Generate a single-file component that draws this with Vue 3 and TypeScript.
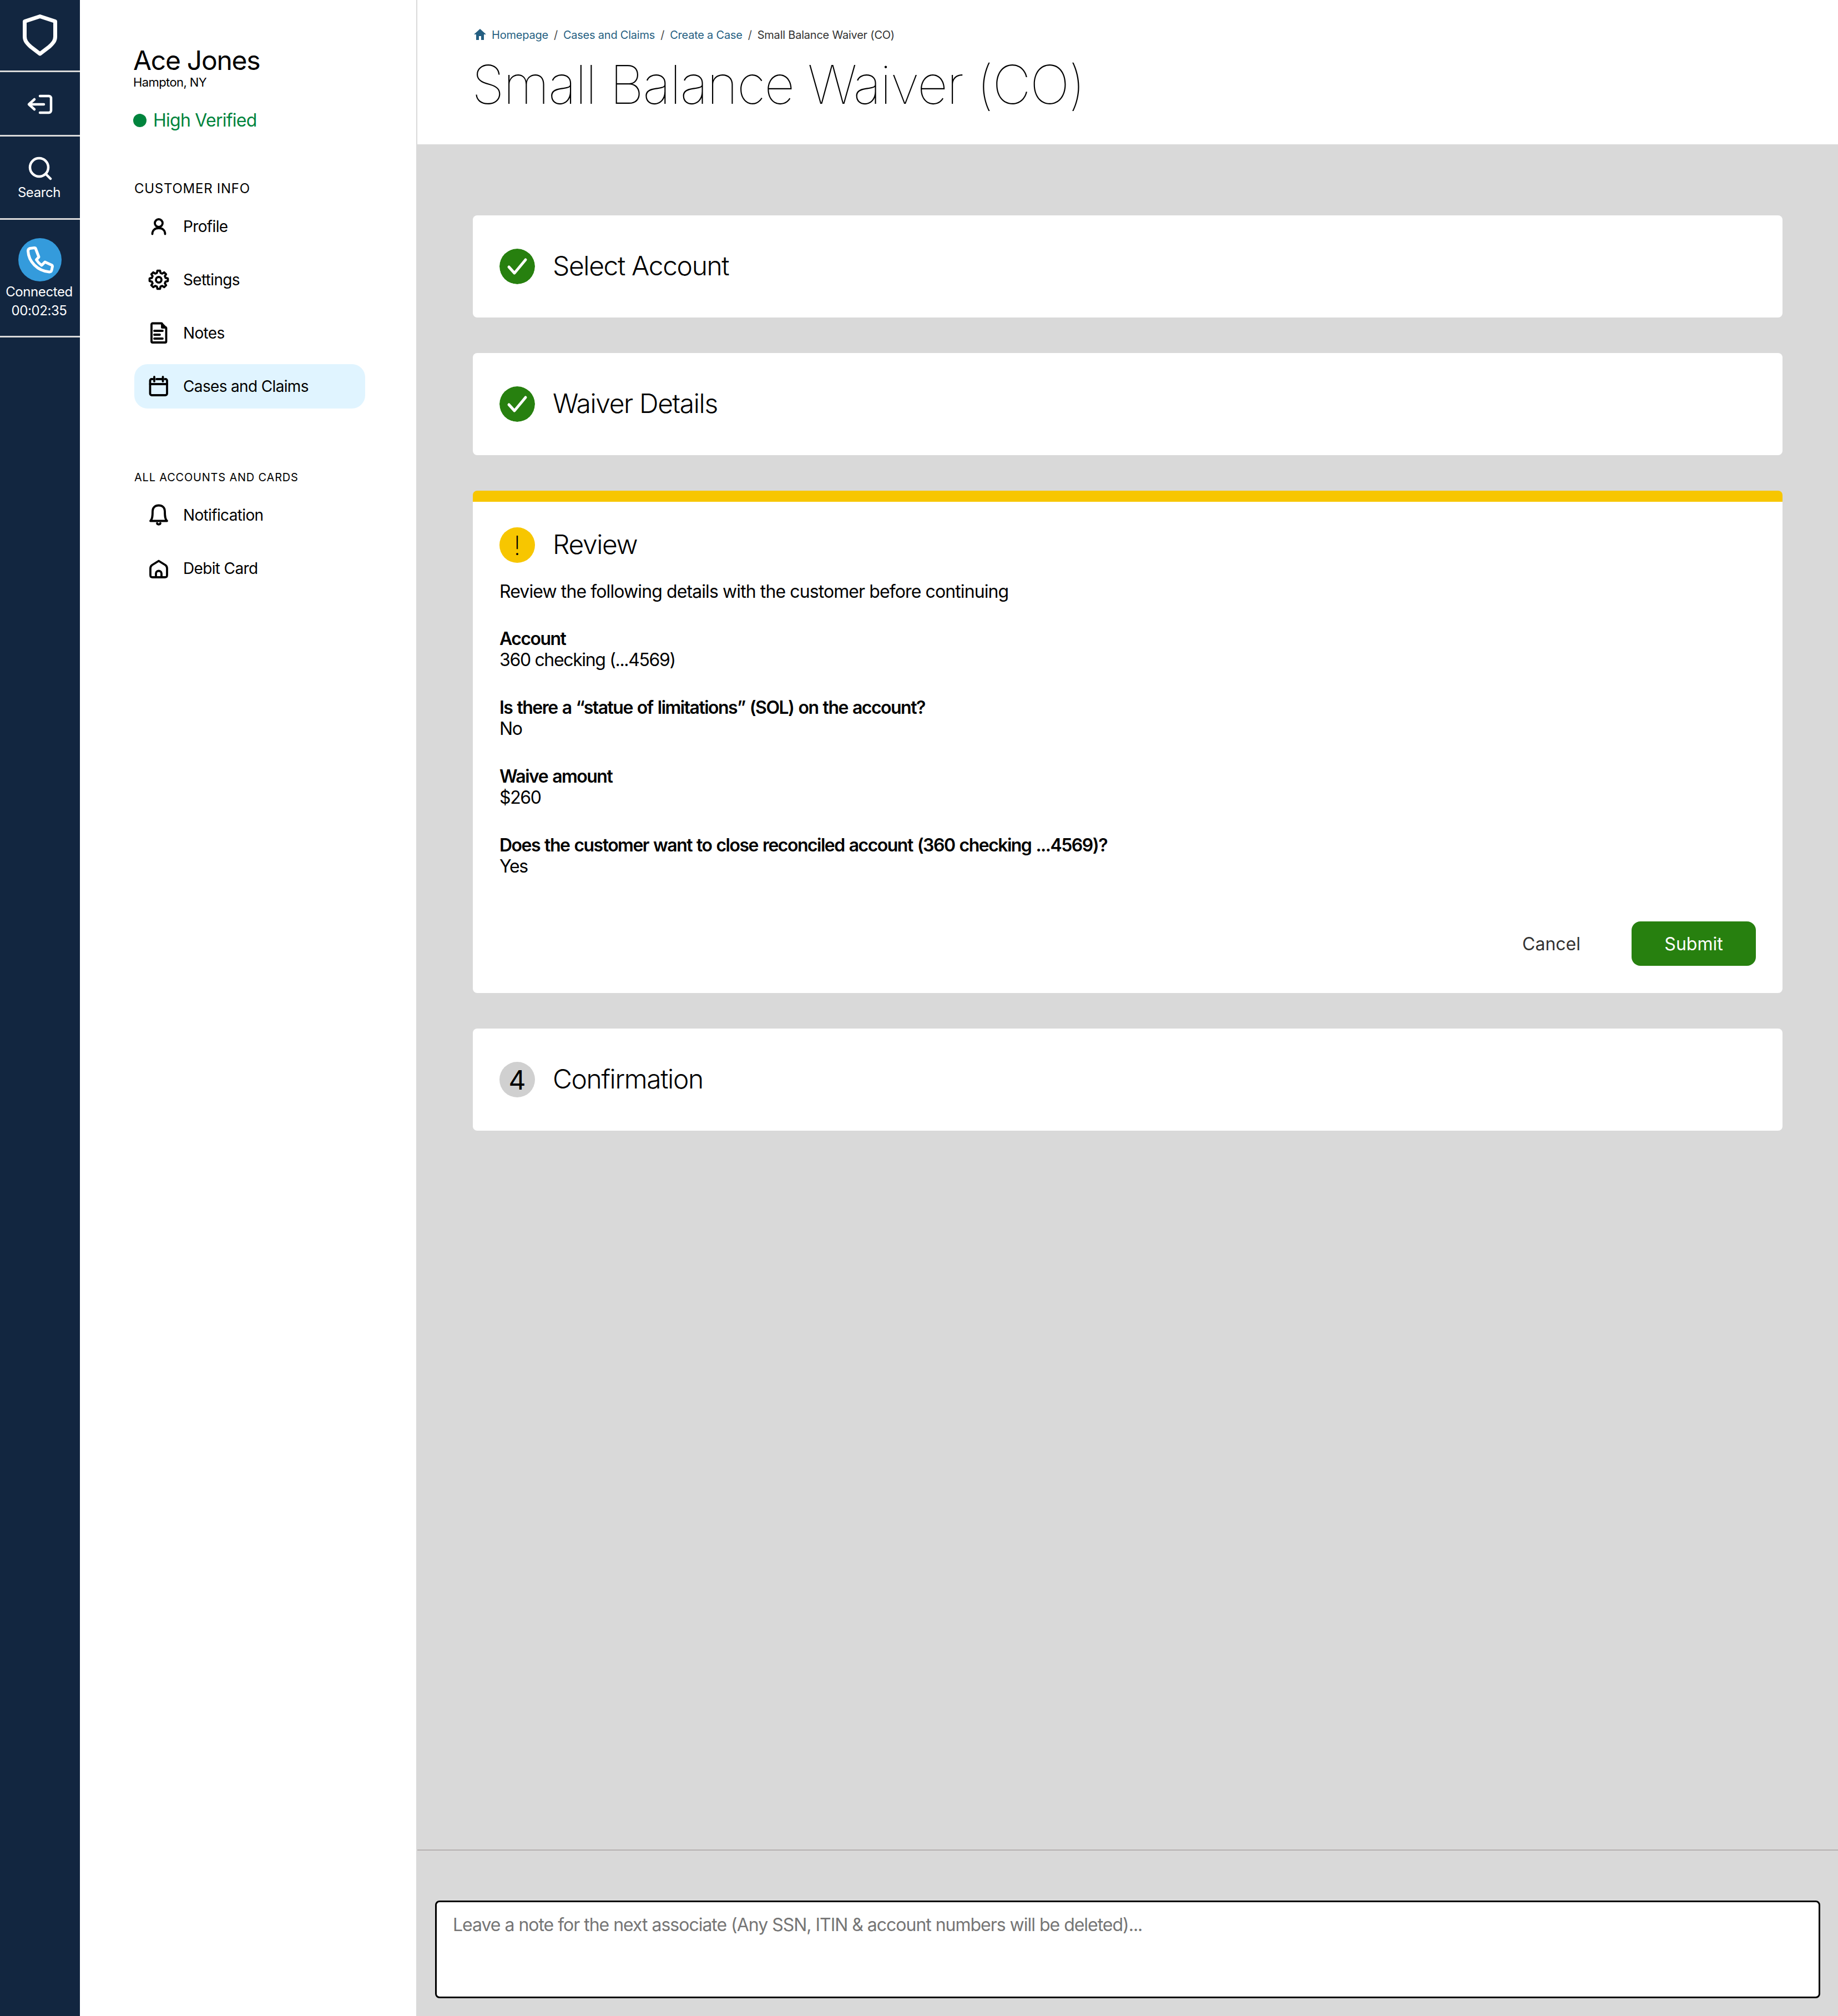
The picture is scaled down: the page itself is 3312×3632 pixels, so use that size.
<script setup lang="ts">
const customerItems = [
  { label: 'Profile', icon: 'profile' },
  { label: 'Settings', icon: 'settings' },
  { label: 'Notes', icon: 'notes' },
  { label: 'Cases and Claims', icon: 'cases', active: true },
]
const accountItems = [
  { label: 'Notification', icon: 'bell' },
  { label: 'Debit Card', icon: 'home' },
]
const details = [
  { q: 'Account', a: '360 checking (...4569)' },
  { q: 'Is there a “statue of limitations” (SOL) on the account?', a: 'No' },
  { q: 'Waive amount', a: '$260' },
  { q: 'Does the customer want to close reconciled account (360 checking ...4569)?', a: 'Yes' },
]

function polar(r: number, deg: number): string {
  const a = (deg * Math.PI) / 180
  return `${(20 + r * Math.cos(a)).toFixed(2)} ${(20 + r * Math.sin(a)).toFixed(2)}`
}
const gearPath = (() => {
  const pts: string[] = []
  for (let i = 0; i < 8; i++) {
    const c = i * 45 - 90
    pts.push(polar(12.8, c - 15), polar(16.6, c - 8), polar(16.6, c + 8), polar(12.8, c + 15))
  }
  return 'M' + pts.join(' L') + ' Z'
})()
</script>

<template>
  <div class="page">
    <nav class="rail">
      <div class="rail-cell logo">
        <svg width="62" height="75" viewBox="0 0 62 75" fill="none" stroke="#fff" stroke-width="7" stroke-linejoin="round"><path d="M31 3.500 L58.500 12.500 V40 C58.500 48 54 52 48 58 L31 71 L14 58 C8 52 3.500 48 3.500 40 V12.500 Z" /></svg>
      </div>
      <div class="rail-cell exit">
        <svg width="48" height="40" viewBox="0 0 48 40" fill="none" stroke="#fff" stroke-width="4.5" stroke-linecap="round" stroke-linejoin="round"><path d="M24 5 H40 a4 4 0 0 1 4 4 V31 a4 4 0 0 1 -4 4 H24" /><path d="M31 20 H5 M14 11 L4 20 L14 29" /></svg>
      </div>
      <div class="rail-cell search">
        <svg width="44" height="44" viewBox="0 0 44 44" fill="none" stroke="#fff" stroke-width="4.5" stroke-linecap="round"><circle cx="20.500" cy="20.500" r="16.500" /><path d="M33 33 L41 41" /></svg>
        <span>Search</span>
      </div>
      <div class="rail-cell call">
        <div class="phone">
          <svg width="78" height="78" viewBox="0 0 78 78" fill="none" stroke="#fff" stroke-width="5" stroke-linejoin="round"><path d="M17.500 23 C17.500 20 19 19 21 18.500 L29 17.500 C30 17.500 31 18 31.300 19 L37 34 L32.500 39 C35 43 38 46 42 49 L48 43 L60 48.500 C61 49 61.500 50 61.500 51 L60 58 C59.500 60 58.500 61 56 61 C34 59 18.500 42 17.500 23 Z" /></svg>
        </div>
        <span>Connected</span>
        <span>00:02:35</span>
      </div>
    </nav>

    <aside class="side">
      <h2 class="name">Ace Jones</h2>
      <p class="place">Hampton, NY</p>
      <p class="verified"><i class="dot"></i>High Verified</p>

      <h3 class="group first">CUSTOMER INFO</h3>
      <ul class="menu">
        <li v-for="item in customerItems" :key="item.label" :class="{ active: item.active }">
          <svg width="40" height="40" viewBox="0 0 40 40" fill="none" stroke="#000" stroke-width="3.8" stroke-linecap="round" stroke-linejoin="round">
            <template v-if="item.icon === 'profile'">
              <circle cx="20" cy="14" r="7" />
              <path d="M8.500 33.500 C8.500 27 13 23 20 23 C27 23 31.500 27 31.500 33.500" />
            </template>
            <template v-else-if="item.icon === 'settings'">
              <circle cx="20" cy="20" r="5" />
              <path :d="gearPath" />
            </template>
            <template v-else-if="item.icon === 'notes'">
              <path d="M9 2.500 H25 L33.500 11 V35 a2 2 0 0 1 -2 2 H9 a2 2 0 0 1 -2 -2 V4.500 a2 2 0 0 1 2 -2 Z" />
              <path d="M26 3 V10 H33" />
              <path d="M12 16 H27 M12 23 H22 M12 30 H27" />
            </template>
            <template v-else>
              <path d="M9 7 H7 a2.500 2.500 0 0 0 -2.500 2.500 V33 a3 3 0 0 0 3 3 H32 a3 3 0 0 0 3 -3 V9.500 a2.500 2.500 0 0 0 -2.500 -2.500 H31" />
              <path d="M4.500 16 H35 M12 3 V11 M27.500 3 V11 M16 7 H27.500" />
            </template>
          </svg>
          <span>{{ item.label }}</span>
        </li>
      </ul>

      <h3 class="group second">ALL ACCOUNTS AND CARDS</h3>
      <ul class="menu">
        <li v-for="item in accountItems" :key="item.label">
          <svg width="40" height="40" viewBox="0 0 40 40" fill="none" stroke="#000" stroke-width="3.8" stroke-linecap="round" stroke-linejoin="round">
            <template v-if="item.icon === 'bell'">
              <path d="M5 30.500 C8 28 9 24 9 13 C9 6 14 2.500 20 2.500 C26 2.500 31 6 31 13 C31 24 32 28 35 30.500 Z" />
              <path d="M17 34.500 C17.500 37.500 22.500 37.500 23 34.500" />
            </template>
            <template v-else>
              <path d="M20 6.500 L32 14 C34 15.500 35 17 35 20 V32 C35 35 34 36 31 36 H9 C6 36 5 35 5 32 V20 C5 17 6 15.500 8 14 Z" />
              <path d="M15 36 V29 C15 23 25 23 25 29 V36" />
            </template>
          </svg>
          <span>{{ item.label }}</span>
        </li>
      </ul>
    </aside>

    <main class="main">
      <header class="head">
        <div class="crumbs">
          <svg width="22" height="20" viewBox="0 0 22 20" fill="#255f82"><path d="M11 0 L22 10 H18 V20 H13 V13 H9 V20 H4 V10 H0 Z" /></svg>
          <a>Homepage</a><b>/</b><a>Cases and Claims</a><b>/</b><a>Create a Case</a><b>/</b><em>Small Balance Waiver (CO)</em>
        </div>
        <h1>Small Balance Waiver (CO)</h1>
      </header>

      <section class="content">
        <article class="card">
          <div class="step">
            <svg class="badge" width="64" height="64" viewBox="0 0 64 64"><circle cx="32" cy="32" r="32" fill="#27800f" /><path d="M17 33 L27 44 L47 20" fill="none" stroke="#fff" stroke-width="5" stroke-linecap="round" stroke-linejoin="round" /></svg>
            <h2>Select Account</h2>
          </div>
        </article>
        <article class="card">
          <div class="step">
            <svg class="badge" width="64" height="64" viewBox="0 0 64 64"><circle cx="32" cy="32" r="32" fill="#27800f" /><path d="M17 33 L27 44 L47 20" fill="none" stroke="#fff" stroke-width="5" stroke-linecap="round" stroke-linejoin="round" /></svg>
            <h2>Waiver Details</h2>
          </div>
        </article>
        <article class="card review">
          <div class="step-top">
            <span class="badge warn">!</span>
            <h2>Review</h2>
          </div>
          <p class="intro">Review the following details with the customer before continuing</p>
          <dl class="details">
            <div v-for="d in details" :key="d.q">
              <dt>{{ d.q }}</dt>
              <dd>{{ d.a }}</dd>
            </div>
          </dl>
          <div class="actions">
            <button class="cancel">Cancel</button>
            <button class="submit">Submit</button>
          </div>
        </article>
        <article class="card">
          <div class="step">
            <span class="badge num">4</span>
            <h2>Confirmation</h2>
          </div>
        </article>
      </section>

      <footer class="foot">
        <div class="note">Leave a note for the next associate (Any SSN, ITIN &amp; account numbers will be deleted)...</div>
      </footer>
    </main>
  </div>
</template>

<style>
html, body { margin: 0; padding: 0; }
</style>

<style scoped>
.page {
  display: flex;
  width: 3312px;
  height: 3632px;
  overflow: hidden;
  font-family: Inter, "Liberation Sans", sans-serif;
  color: #000;
  background: #fff;
}
.rail {
  width: 144px;
  flex: none;
  background: #122640;
  color: #fff;
  font-size: 24px;
  letter-spacing: -0.4px;
  display: flex;
  flex-direction: column;
}
.rail-cell {
  display: flex;
  flex-direction: column;
  align-items: center;
  border-bottom: 3px solid #d9d9d9;
  box-sizing: border-box;
}
.rail-cell span { margin-left: -3px; }
.logo { height: 130px; padding-top: 26px; }
.exit { height: 116px; padding-top: 38px; }
.search { height: 150px; padding-top: 35px; }
.search span { margin-top: 7px; line-height: 30px; }
.call { height: 212px; padding-top: 33px; line-height: 34px; }
.call span:nth-child(2) { margin-top: 2px; }
.phone {
  width: 78px;
  height: 78px;
  border-radius: 50%;
  background: #349bdc;
  display: flex;
  align-items: center;
  justify-content: center;
}
.side {
  width: 606px;
  flex: none;
  box-sizing: border-box;
  padding: 80px 92px 0 96px;
}
.name { margin: 0; font-size: 48px; font-weight: 400; line-height: 58px; letter-spacing: -1.3px; }
.place { margin: -3px 0 0 0; font-size: 22px; line-height: 26px; letter-spacing: -0.6px; }
.verified {
  margin: 36px 0 0 0;
  display: flex;
  align-items: center;
  gap: 12px;
  font-size: 32px;
  line-height: 40px;
  letter-spacing: -0.75px;
  color: #00843d;
}
.dot { width: 24px; height: 24px; border-radius: 50%; background: #00843d; }
.group { margin: 0 0 0 2px; font-weight: 400; }
.group.first { margin-top: 88px; font-size: 24px; line-height: 30px; letter-spacing: 0.73px; }
.group.second { margin-top: 110px; font-size: 20px; line-height: 29px; letter-spacing: 0.8px; }
.menu {
  list-style: none;
  margin: 13px 0 0 2px;
  padding: 0;
  display: flex;
  flex-direction: column;
  gap: 16px;
}
.menu li {
  height: 80px;
  display: flex;
  align-items: center;
  gap: 24px;
  padding-left: 24px;
  border-radius: 24px;
  font-size: 28px;
  letter-spacing: -0.65px;
}
.menu li.active { background: #e0f4ff; }
.main {
  flex: 1;
  min-width: 0;
  display: flex;
  flex-direction: column;
  background: #d9d9d9;
}
.head {
  height: 260px;
  flex: none;
  box-sizing: border-box;
  background: #fff;
  padding: 47px 0 0 102px;
  margin-left: 2px;
}
.crumbs {
  display: flex;
  align-items: center;
  height: 32px;
  font-size: 20px;
  letter-spacing: -0.22px;
  color: #255f82;
}
.crumbs svg { margin: 0 10px 2px 0; }
.crumbs b { font-weight: 400; color: #4a4a4a; margin: 0 10px; }
.crumbs em { font-style: normal; color: #333; }
h1 {
  margin: 15px 0 0 -4px;
  font-size: 96px;
  font-weight: 120;
  line-height: 116px;
  letter-spacing: -2px;
}
.content {
  flex: 1;
  min-height: 0;
  box-sizing: border-box;
  padding: 128px 100px 0 102px;
  display: flex;
  flex-direction: column;
  gap: 64px;
}
.card {
  background: #fff;
  border-radius: 8px;
  overflow: hidden;
}
.step {
  height: 184px;
  display: flex;
  align-items: center;
  gap: 32px;
  padding-left: 48px;
}
.step h2, .step-top h2 {
  margin: 0 0 3px;
  font-size: 48px;
  font-weight: 300;
  letter-spacing: -1.4px;
}
.badge {
  flex: none;
  width: 64px;
  height: 64px;
  border-radius: 50%;
  display: flex;
  align-items: center;
  justify-content: center;
}
.warn { background: #f7c600; font-size: 48px; font-weight: 200; }
.num { background: #d0d0d0; font-size: 48px; font-weight: 400; }
.review { border-top: 20px solid #f7c600; padding: 46px 48px 49px; }
.step-top { display: flex; align-items: center; gap: 32px; height: 64px; }
.intro { margin: 32px 0 0; font-size: 32px; line-height: 40px; letter-spacing: -0.9px; }
.details { margin: 46px 0 0; display: flex; flex-direction: column; gap: 48px; }
.details dt { font-size: 32px; line-height: 38px; font-weight: 600; letter-spacing: -1.52px; word-spacing: 1.5px; }
.details dd { margin: 0; font-size: 32px; line-height: 38px; letter-spacing: -1.35px; }
.actions {
  margin-top: 80px;
  display: flex;
  justify-content: flex-end;
  align-items: center;
  gap: 92px;
}
.actions button {
  font-family: inherit;
  font-size: 32px;
  border: 0;
  padding: 0;
  background: none;
}
.cancel { color: #333; }
.actions .submit {
  width: 224px;
  height: 80px;
  border-radius: 16px;
  background: #27800f;
  color: #fff;
}
.foot {
  height: 300px;
  flex: none;
  box-sizing: border-box;
  border-top: 2px solid #b5b0b0;
  padding: 90px 32px 0;
  margin-left: 2px;
}
.note {
  height: 176px;
  box-sizing: border-box;
  background: #fff;
  border: 3px solid #000;
  border-radius: 8px;
  padding: 21px 29px;
  font-size: 32px;
  line-height: 40px;
  letter-spacing: -1.02px;
  color: #757575;
}
</style>
